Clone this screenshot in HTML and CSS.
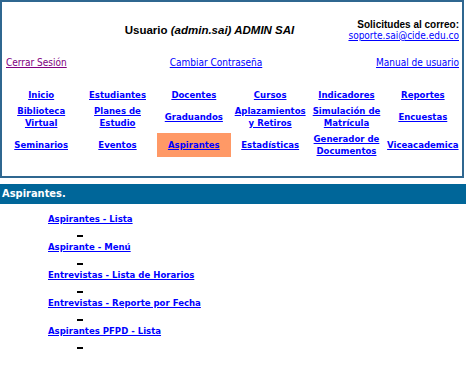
FILE: index.html
```html
<!DOCTYPE html>
<html lang="es">
<head>
  <meta charset="UTF-8" />
  <title>SAI - Aspirantes</title>
  <link rel="stylesheet" href="styles.css">
</head>
<body>
  <div class="top-box">
    <div class="header">
      <div></div>
      <div class="user">Usuario <i>(admin.sai) ADMIN SAI</i></div>
      <div class="contact">
        Solicitudes al correo:<br>
        <a href="#">soporte.sai@cide.edu.co</a>
      </div>
    </div>

    <div class="session-links">
      <a href="#" class="visited">Cerrar Sesión</a>
      <a href="#" class="mid">Cambiar Contraseña</a>
      <a href="#" class="right">Manual de usuario</a>
    </div>

    <!-- menu principal -->
    <div class="menu">
      <div class="cell"><a href="#">Inicio</a></div>
      <div class="cell"><a href="#">Estudiantes</a></div>
      <div class="cell"><a href="#">Docentes</a></div>
      <div class="cell"><a href="#">Cursos</a></div>
      <div class="cell"><a href="#">Indicadores</a></div>
      <div class="cell"><a href="#">Reportes</a></div>

      <div class="cell"><a href="#">Biblioteca<br>Virtual</a></div>
      <div class="cell"><a href="#">Planes de<br>Estudio</a></div>
      <div class="cell"><a href="#">Graduandos</a></div>
      <div class="cell"><a href="#">Aplazamientos<br>y Retiros</a></div>
      <div class="cell"><a href="#">Simulación de<br>Matrícula</a></div>
      <div class="cell"><a href="#">Encuestas</a></div>

      <div class="cell"><a href="#">Seminarios</a></div>
      <div class="cell"><a href="#">Eventos</a></div>
      <div class="cell active"><a href="#">Aspirantes</a></div>
      <div class="cell"><a href="#">Estadísticas</a></div>
      <div class="cell"><a href="#">Generador de<br>Documentos</a></div>
      <div class="cell"><a href="#">Viceacademica</a></div>
    </div>
  </div>

  <div class="bar">Aspirantes.</div>

  <ul class="options">
    <li><a href="#">Aspirantes - Lista</a><span class="dash"></span></li>
    <li><a href="#">Aspirante - Menú</a><span class="dash"></span></li>
    <li><a href="#">Entrevistas - Lista de Horarios</a><span class="dash"></span></li>
    <li><a href="#">Entrevistas - Reporte por Fecha</a><span class="dash"></span></li>
    <li><a href="#">Aspirantes PFPD - Lista</a><span class="dash"></span></li>
  </ul>
</body>
</html>
```

FILE: styles.css
```css
body {
  margin: 0;
  background-color: #fff;
  font-family: "DejaVu Sans Condensed", "DejaVu Sans", sans-serif;
  font-size: 9px;
}
a {
  color: #0000ff;
  font-weight: bold;
}
.top-box {
  width: 460px;
  border: 2px solid #2f6790;
  padding-bottom: 19px;
}
.header {
  display: grid;
  grid-template-columns: 71px 1fr 113px;
  align-items: center;
  height: 32px;
  padding: 12px 3px 0 0;
}
.user {
  font-family: "Liberation Sans", Arial, sans-serif;
  font-weight: bold;
  font-size: 11.5px;
  text-align: center;
  color: #000;
}
.contact {
  font-family: "Liberation Sans", Arial, sans-serif;
  font-weight: bold;
  font-size: 10px;
  line-height: 11px;
  text-align: right;
}
.contact a {
  font-family: "DejaVu Sans Condensed", "DejaVu Sans", sans-serif;
  font-weight: normal;
  font-size: 10px;
}
.session-links {
  display: grid;
  grid-template-columns: 88px 1fr 121px;
  align-items: center;
  height: 32px;
  padding: 0 3px 0 4px;
  font-size: 10px;
}
.session-links a {
  font-weight: normal;
}
.session-links .visited {
  color: #800080;
}
.session-links .mid {
  text-align: center;
}
.session-links .right {
  text-align: right;
}
.menu {
  display: grid;
  grid-template-columns: repeat(6, 1fr);
  column-gap: 2px;
  row-gap: 4px;
  padding: 11px 2px 0 2px;
  line-height: 12px;
  font-size: 9.5px;
}
.cell {
  display: flex;
  align-items: center;
  justify-content: center;
  text-align: center;
  min-height: 12px;
}
.cell.active {
  background-color: #ff9966;
}
.bar {
  width: 464px;
  margin-top: 6px;
  height: 20px;
  line-height: 20px;
  padding-left: 2px;
  background-color: #006699;
  color: #fff;
  font-weight: bold;
  font-size: 11px;
}
.options {
  list-style: none;
  margin: 0;
  padding: 9px 0 0 48px;
  font-size: 9.5px;
}
.options li {
  height: 28px;
  line-height: 12px;
}
.dash {
  display: block;
  width: 6px;
  height: 2px;
  margin: 10px 0 0 29px;
  background-color: #000;
}
```
